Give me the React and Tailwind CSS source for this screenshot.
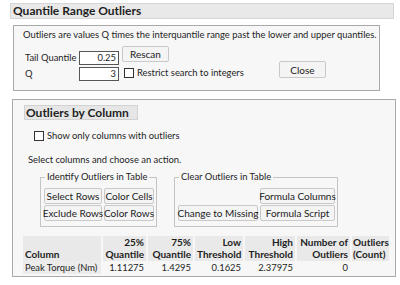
import { useState } from 'react';

const Btn = ({ children, className = '' }) => (
  <button
    className={`h-[16px] border border-[#c9c9c9] rounded-[2px] bg-[#f4f4f4] text-[10px] leading-none text-[#222] whitespace-nowrap flex items-center justify-center ${className}`}
  >
    {children}
  </button>
);

const Check = ({ checked, onChange }) => (
  <span
    onClick={onChange}
    className="w-[10px] h-[10px] border border-[#333] bg-white inline-block shrink-0"
  >
    {checked && <span className="block w-full h-full bg-[#333]" />}
  </span>
);

const Group = ({ title, className = '', children }) => (
  <div className={`relative border border-[#c4c4c4] h-[50px] ${className}`}>
    <span className="absolute -top-[8px] left-[4px] px-[2px] bg-[#f7f7f7] leading-[14px] whitespace-nowrap">
      {title}
    </span>
    {children}
  </div>
);

const cols = [
  { w: 'w-[78px]', top: '', bottom: 'Column', left: true },
  { w: 'w-[43px]', top: '25%', bottom: 'Quantile' },
  { w: 'w-[45px]', top: '75%', bottom: 'Quantile' },
  { w: 'w-[48px]', top: 'Low', bottom: 'Threshold' },
  { w: 'w-[50px]', top: 'High', bottom: 'Threshold' },
  { w: 'w-[53px]', top: 'Number of', bottom: 'Outliers' },
  { w: 'w-[37px]', top: 'Outliers', bottom: '(Count)', left: true },
];

const row = ['Peak Torque (Nm)', '1.11275', '1.4295', '0.1625', '2.37975', '0', ''];

export default function App() {
  const [restrict, setRestrict] = useState(false);
  const [onlyOutliers, setOnlyOutliers] = useState(false);

  return (
    <div className="w-[400px] h-[285px] bg-white text-[#1e1e1e] text-[9.4px] overflow-hidden whitespace-nowrap font-['Lato',sans-serif]">
      {/* title bar */}
      <div className="ml-[10px] mt-[3px] w-[384px] h-[16px] bg-[#e9e9e9] border border-[#d6d6d6] flex items-center pl-[2px]">
        <span className="font-bold text-[12px] leading-none">Quantile Range Outliers</span>
      </div>

      {/* settings box */}
      <div className="ml-[13px] mt-[6px] w-[367px] h-[66px] border border-[#a9a9a9] bg-[#f7f7f7]">
        <p className="ml-[9px] mt-[2px] leading-[14px]">
          Outliers are values Q times the interquantile range past the lower and upper quantiles.
        </p>
        <div className="flex ml-[11px] mt-[4px]">
          <div className="flex flex-col w-[54px] pt-[5px] gap-[2px] leading-[14px]">
            <span>Tail Quantile</span>
            <span>Q</span>
          </div>
          <div className="flex flex-col gap-[2px] pt-[5px]">
            <div className="w-[40px] h-[14px] border border-[#555] bg-white text-right pr-[2px] leading-[12px]">0.25</div>
            <div className="w-[40px] h-[14px] border border-[#555] bg-white text-right pr-[2px] leading-[12px]">3</div>
          </div>
          <div className="flex flex-col ml-[3px]">
            <Btn className="w-[47px] h-[16px]">Rescan</Btn>
            <div className="flex items-center gap-[3px] mt-[5px] ml-[2px]">
              <Check checked={restrict} onChange={() => setRestrict(!restrict)} />
              <span className="leading-[12px]">Restrict search to integers</span>
            </div>
          </div>
          <div className="ml-auto mr-[53px] pt-[15px]">
            <Btn className="w-[47px] h-[17px]">Close</Btn>
          </div>
        </div>
      </div>

      {/* outliers by column */}
      <div className="ml-[12px] mt-[8px] w-[384px] h-[178px] border border-[#a9a9a9] bg-[#f7f7f7]">
        <div className="ml-[11px] mt-[5px] w-[114px] h-[15px] bg-[#e6e6e6] border border-[#d2d2d2] flex items-center pl-[1px]">
          <span className="font-bold text-[12px] leading-none">Outliers by Column</span>
        </div>

        <div className="flex items-center gap-[3px] ml-[21px] mt-[10px]">
          <Check checked={onlyOutliers} onChange={() => setOnlyOutliers(!onlyOutliers)} />
          <span className="leading-[12px]">Show only columns with outliers</span>
        </div>

        <p className="ml-[15px] mt-[11px] leading-[14px]">Select columns and choose an action.</p>

        <div className="flex mt-[10px]">
          <Group title="Identify Outliers in Table" className="ml-[27px] w-[117px]">
            <div className="grid grid-cols-[58px_50px] gap-x-[2px] gap-y-[1px] ml-[3px] mt-[10px]">
              <Btn>Select Rows</Btn>
              <Btn>Color Cells</Btn>
              <Btn>Exclude Rows</Btn>
              <Btn>Color Rows</Btn>
            </div>
          </Group>
          <Group title="Clear Outliers in Table" className="ml-[17px] w-[164px]">
            <div className="grid grid-cols-[80px_75px] gap-x-[2px] gap-y-[1px] ml-[3px] mt-[10px]">
              <span />
              <Btn>Formula Columns</Btn>
              <Btn>Change to Missing</Btn>
              <Btn>Formula Script</Btn>
            </div>
          </Group>
        </div>

        {/* table */}
        <div className="ml-[10px] mt-[9px] flex gap-[2px]">
          {cols.map((c, i) => (
            <div key={i} className={`${c.w} flex flex-col`}>
              <div
                className={`h-[25px] bg-[#e9e9e9] font-bold text-[10px] leading-[12px] flex flex-col justify-end pb-[1px] ${
                  c.left ? 'text-left' : 'text-right'
                } ${i === 6 ? 'px-[1px]' : 'px-[2px]'}`}
              >
                <span>{c.top}</span>
                <span>{c.bottom}</span>
              </div>
              <div
                className={`h-[13px] leading-[13px] px-[2px] ${
                  i === 0 ? 'bg-[#ececec] text-left' : 'text-right'
                } ${i === 6 ? 'text-left' : ''}`}
              >
                {row[i]}
              </div>
            </div>
          ))}
        </div>
      </div>
    </div>
  );
}
